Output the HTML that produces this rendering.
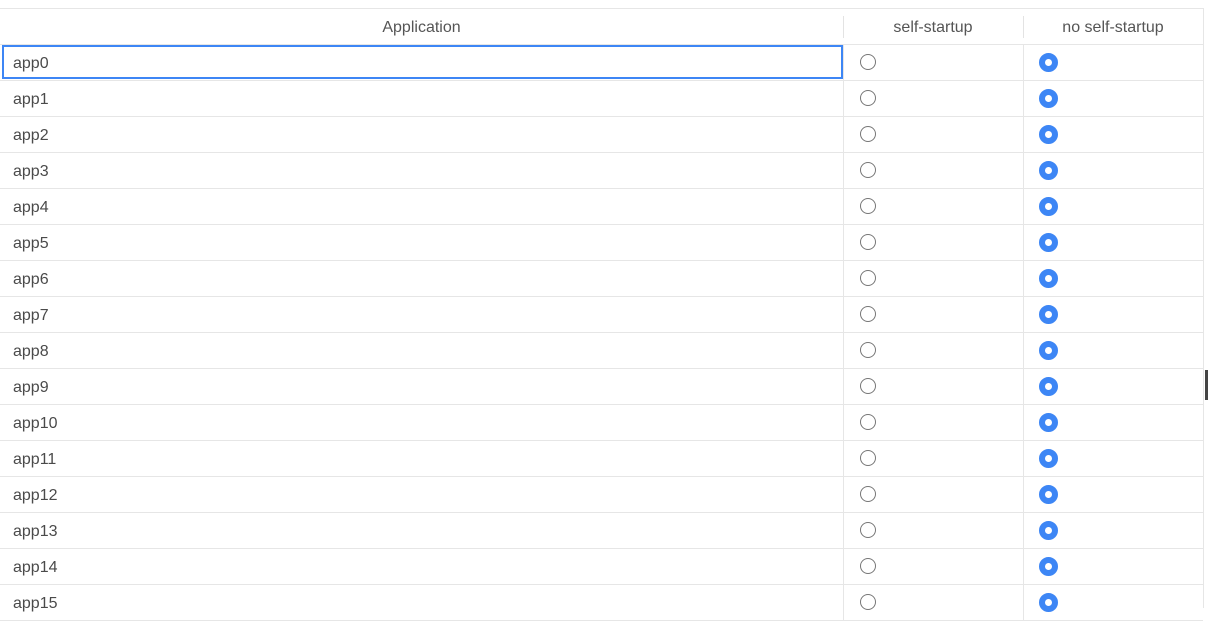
<!DOCTYPE html>
<html><head><style>
body{margin:0;width:1208px;height:608px;overflow:hidden;background:#fff;font-family:"Liberation Sans",sans-serif;position:relative}
.top{position:absolute;left:0;top:8px;width:1204px;height:1px;background:#e6e6e6}
.rb{position:absolute;left:1203px;top:8px;width:1px;height:600px;background:#e6e6e6}
.hdr{position:absolute;top:9px;height:35px;line-height:37px;font-size:16px;color:#555;text-align:center}
.sep{position:absolute;top:16px;height:22px;width:1px;background:#e3e3e3}
.row{position:absolute;left:0;width:1203px;height:36px;border-bottom:1px solid #e6e6e6;box-sizing:border-box}
.row span{position:absolute;left:13px;top:1px;line-height:36px;font-size:16px;color:#4a4a4a}
.vl{position:absolute;top:0;width:1px;height:36px;background:#e6e6e6}
.r1{position:absolute;left:860px;top:9px;width:16px;height:16px;border:1.3px solid #777;border-radius:50%;box-sizing:border-box}
.r2{position:absolute;left:1039px;top:8px;width:19px;height:19px;border:6px solid #3d86f5;border-radius:50%;box-sizing:border-box}
.focus{position:absolute;left:2px;top:45px;width:841px;height:34px;border:2px solid #3d86f5;box-sizing:border-box}
.sb{position:absolute;left:1205px;top:370px;width:3px;height:30px;background:#444}
</style></head><body>
<div class="top"></div>
<div class="hdr" style="left:0;width:843px">Application</div>
<div class="hdr" style="left:843px;width:180px">self-startup</div>
<div class="hdr" style="left:1023px;width:180px">no self-startup</div>
<div class="sep" style="left:843px"></div>
<div class="sep" style="left:1023px"></div>
<div style="position:absolute;left:0;top:44px;width:1203px;height:1px;background:#e6e6e6"></div>
<div id="rows"></div>
<div class="rb"></div>
<div class="sb"></div>
<script>
var h='';for(var i=0;i<16;i++){h+='<div class="row" style="top:'+(45+i*36)+'px"><span>app'+i+'</span><div class="vl" style="left:843px"></div><div class="vl" style="left:1023px"></div><div class="r1"></div><div class="r2"></div></div>';}
document.getElementById('rows').innerHTML=h+'<div class="focus"></div>';
</script>
</body></html>
